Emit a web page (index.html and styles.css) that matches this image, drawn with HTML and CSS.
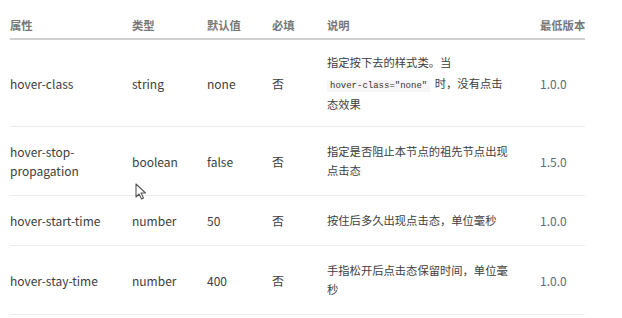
FILE: index.html
```html
<!DOCTYPE html>
<html lang="zh">
<head>
<meta charset="utf-8">
<link rel="stylesheet" href="styles.css">
</head>
<body>
<div class="wrap">
<table class="props">
  <colgroup>
    <col class="c1"><col class="c2"><col class="c3"><col class="c4"><col class="c5"><col class="c6">
  </colgroup>
  <thead>
    <tr><th>属性</th><th>类型</th><th>默认值</th><th>必填</th><th>说明</th><th>最低版本</th></tr>
  </thead>
  <tbody>
    <tr><td>hover-class</td><td>string</td><td>none</td><td>否</td><td class="desc first">指定按下去的样式类。当 <code>hover-class="none"</code> 时，没有点击态效果</td><td class="ver">1.0.0</td></tr>
    <tr><td>hover-stop-<br>propagation</td><td>boolean</td><td>false</td><td>否</td><td class="desc">指定是否阻止本节点的祖先节点出现点击态</td><td class="ver">1.5.0</td></tr>
    <tr><td>hover-start-time</td><td>number</td><td>50</td><td>否</td><td class="desc">按住后多久出现点击态，单位毫秒</td><td class="ver">1.0.0</td></tr>
    <tr><td>hover-stay-time</td><td>number</td><td>400</td><td>否</td><td class="desc">手指松开后点击态保留时间，单位毫秒</td><td class="ver">1.0.0</td></tr>
  </tbody>
</table>
<svg class="cursor" width="12" height="17" viewBox="0 0 12 17"><path d="M1 1 L1 14 L4 11 L6.5 16 L8.5 15 L6 10 L10.5 10 Z" fill="#fff" stroke="#555" stroke-width="1.1" stroke-linejoin="round"/></svg>
</div>
</body>
</html>
```
FILE: styles.css
```css
html, body { margin: 0; padding: 0; background: #fff; }
body { font-family: "Noto Sans CJK SC", "Noto Sans", sans-serif; font-size: 11.3px; color: #3d3d3d; }
.wrap { position: relative; padding: 0 0 0 10px; }
.props { border-collapse: collapse; table-layout: fixed; width: 575px; }
.c1 { width: 122px; } .c2 { width: 75px; } .c3 { width: 65px; } .c4 { width: 55px; } .c5 { width: 213px; } .c6 { width: 45px; }
.props th { text-align: left; font-weight: bold; color: #777; padding: 16px 0 3px 0; line-height: 19px; border-bottom: 2px solid #d0d0d0; white-space: nowrap; }
.props td { padding: 15px 0; line-height: 19px; border-bottom: 1px solid #ececec; vertical-align: middle; font-size: 12px; }
.props td.desc { padding-right: 31px; font-size: 11.3px; }
.props td.desc.first { line-height: 21px; padding: 12px 31px 11px 0; }
.props td.ver { color: #5d6b80; }
code { font-family: "Liberation Mono", monospace; font-size: 9px; line-height: 1; background: #f6f6f6; padding: 1px 3px; margin: 0 2px 0 0; color: #333; white-space: nowrap; }
.cursor { position: absolute; left: 135px; top: 183px; }
```
